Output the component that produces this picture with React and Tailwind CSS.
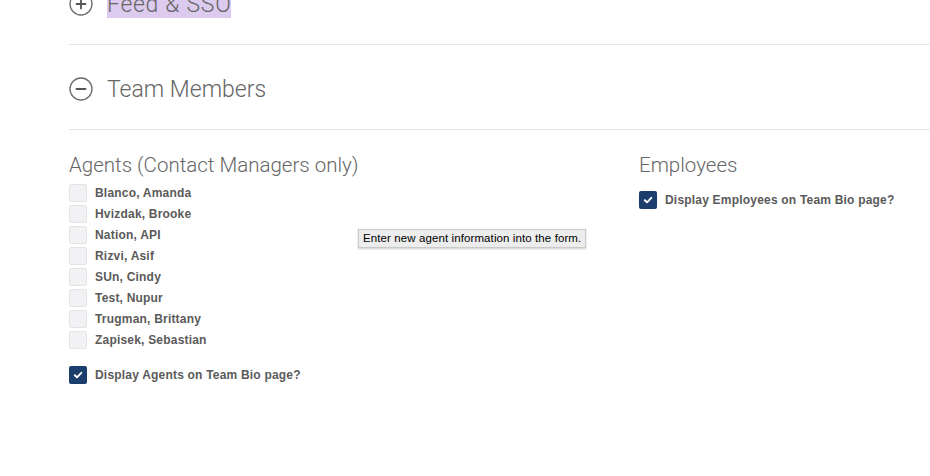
import React from 'react';

const agents = [
  'Blanco, Amanda',
  'Hvizdak, Brooke',
  'Nation, API',
  'Rizvi, Asif',
  'SUn, Cindy',
  'Test, Nupur',
  'Trugman, Brittany',
  'Zapisek, Sebastian',
];

const CircleIcon = ({ plus }) => (
  <svg width="24" height="24" viewBox="0 0 24 24" className="shrink-0">
    <circle cx="12" cy="12" r="11" fill="none" stroke="#6b6b6b" strokeWidth="1.3" />
    <line x1="7.5" y1="12" x2="16.5" y2="12" stroke="#555" strokeWidth="1.8" strokeLinecap="round" />
    {plus && <line x1="12" y1="7.5" x2="12" y2="16.5" stroke="#555" strokeWidth="1.8" strokeLinecap="round" />}
  </svg>
);

const Box = ({ checked }) =>
  checked ? (
    <span className="w-[18px] h-[18px] rounded-[2px] bg-[#1b3e6d] flex items-center justify-center shrink-0">
      <svg width="10" height="10" viewBox="0 0 10 10">
        <path d="M1.8 5.2 L4 7.3 L8.3 2.8" fill="none" stroke="#fff" strokeWidth="1.9" strokeLinecap="round" strokeLinejoin="round" />
      </svg>
    </span>
  ) : (
    <span className="w-[18px] h-[18px] rounded-[2px] bg-[#f2f2f4] border border-[#e4e4e6] shrink-0" />
  );

const Row = ({ checked, label }) => (
  <div className="flex items-center gap-[8px] h-[18px]">
    <Box checked={checked} />
    <span className="text-[12px] font-bold text-[#5a5a5a] tracking-[0.2px]" style={{ fontFamily: '"Liberation Sans", Arial, sans-serif' }}>
      {label}
    </span>
  </div>
);

export default function App() {
  const light = { fontFamily: 'Roboto, "Liberation Sans", sans-serif' };
  return (
    <div className="relative w-[930px] h-[476px] overflow-hidden bg-white">
      <div className="pl-[69px] mt-[-40px]">
        <div className="h-[85px] pt-[3px] flex items-center gap-[14px] border-b border-[#e6e6e6]">
          <CircleIcon plus />
          <span className="text-[23px] font-light text-[#666] bg-[#dccbee] leading-[26px] tracking-[0.7px] relative top-[1px]" style={light}>Feed &amp; SSO</span>
        </div>
        <div className="h-[85px] pt-[3px] flex items-center gap-[14px] border-b border-[#e6e6e6]">
          <CircleIcon />
          <span className="text-[23px] font-light text-[#666] leading-[27px] relative top-[1px]" style={light}>Team Members</span>
        </div>

        <div className="flex pt-[23px]">
          <div className="w-[570px]">
            <h3 className="text-[20.5px] font-light text-[#666] leading-[24px]" style={light}>Agents (Contact Managers only)</h3>
            <div className="mt-[7px] flex flex-col gap-[3px]">
              {agents.map(a => (
                <Row key={a} label={a} />
              ))}
            </div>
            <div className="mt-[17px]">
              <Row checked label="Display Agents on Team Bio page?" />
            </div>
          </div>
          <div>
            <h3 className="text-[20.5px] font-light text-[#666] leading-[24px]" style={light}>Employees</h3>
            <div className="mt-[14px]">
              <Row checked label="Display Employees on Team Bio page?" />
            </div>
          </div>
        </div>
      </div>

      <div
        className="absolute left-[358px] top-[229px] h-[19px] px-[4px] flex items-center bg-[#ededed] border border-[#c9c9c9] shadow-[0_1px_2px_rgba(0,0,0,0.2)] text-[11.5px] tracking-[0.1px] text-black whitespace-nowrap"
        style={{ fontFamily: '"Liberation Sans", Arial, sans-serif' }}
      >
        Enter new agent information into the form.
      </div>
    </div>
  );
}
